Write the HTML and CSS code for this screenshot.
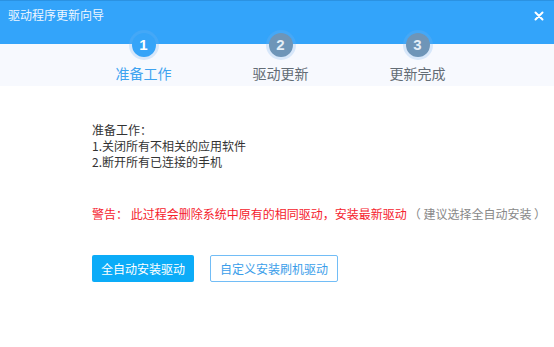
FILE: index.html
```html
<!DOCTYPE html>
<html lang="zh-CN">
<head>
<meta charset="UTF-8">
<title>驱动程序更新向导</title>
<link rel="stylesheet" href="styles.css">
</head>
<body>
<div class="wizard">
    <div class="header">
        <span class="title">驱动程序更新向导</span>
        <svg class="close" width="10" height="10" viewBox="0 0 10 10">
            <path d="M1.5 1.5 L8.5 8.5 M8.5 1.5 L1.5 8.5" stroke="#fff" stroke-width="2" stroke-linecap="round"/>
        </svg>
    </div>
    <div class="steps">
        <div class="step active">
            <div class="num">1</div>
            <div class="label">准备工作</div>
        </div>
        <div class="step">
            <div class="num">2</div>
            <div class="label">驱动更新</div>
        </div>
        <div class="step">
            <div class="num">3</div>
            <div class="label">更新完成</div>
        </div>
    </div>
    <div class="content">
        <p class="info">准备工作：<br>1.关闭所有不相关的应用软件<br>2.断开所有已连接的手机</p>
        <p class="warn">警告： 此过程会删除系统中原有的相同驱动，安装最新驱动<span class="hint">（ 建议选择全自动安装 ）</span></p>
        <div class="buttons">
            <button class="btn primary">全自动安装驱动</button>
            <button class="btn outline">自定义安装刷机驱动</button>
        </div>
    </div>
</div>
</body>
</html>
```

FILE: styles.css
```css
body {
    margin: 0;
    background-color: #fff;
    font-family: "Noto Sans CJK SC", "Liberation Sans", sans-serif;
}
.wizard {
    width: 554px;
    height: 347px;
    overflow: hidden;
}
.header {
    height: 43px;
    border-top: 1px solid #2b92e2;
    background-color: #33a4fa;
    display: flex;
    justify-content: space-between;
    align-items: flex-start;
    padding: 0 10px 0 8px;
}
.title {
    color: #eef6ff;
    font-size: 12px;
    line-height: 28px;
}
.close {
    margin-top: 10px;
}
.steps {
    height: 42px;
    background-color: #f7f9fe;
    display: flex;
    padding-left: 75px;
}
.step {
    width: 137px;
    display: flex;
    flex-direction: column;
    align-items: center;
}
.num {
    width: 24px;
    height: 24px;
    margin-top: -11px;
    border-radius: 50%;
    background-color: #6e95b8;
    box-shadow: 0 0 0 3px rgba(120, 180, 240, 0.25);
    color: #e4eef7;
    font-family: "Liberation Sans", sans-serif;
    font-weight: bold;
    font-size: 15px;
    line-height: 24px;
    text-align: center;
}
.step.active .num {
    background-color: #36a4f8;
    color: #fff;
}
.label {
    margin-top: 6px;
    font-size: 14px;
    line-height: 20px;
    color: #636c75;
}
.step.active .label {
    color: #3ea3f0;
}
.content {
    padding: 36px 0 0 92px;
}
.info {
    margin: 0;
    font-size: 12px;
    line-height: 16px;
    color: #333;
}
.warn {
    margin: 36px 0 0;
    font-size: 12px;
    line-height: 16px;
    color: #f5222d;
}
.hint {
    margin-left: 2px;
    color: #888;
}
.buttons {
    display: flex;
    gap: 16px;
    margin-top: 33px;
}
.btn {
    height: 27px;
    border-radius: 2px;
    font-family: "Noto Sans CJK SC", sans-serif;
    font-size: 12px;
    cursor: pointer;
}
.primary {
    width: 102px;
    border: none;
    background-color: #0cacf8;
    color: #fff;
}
.outline {
    width: 128px;
    border: 1px solid #72bdf6;
    background-color: #fff;
    color: #3a9eea;
}
```
